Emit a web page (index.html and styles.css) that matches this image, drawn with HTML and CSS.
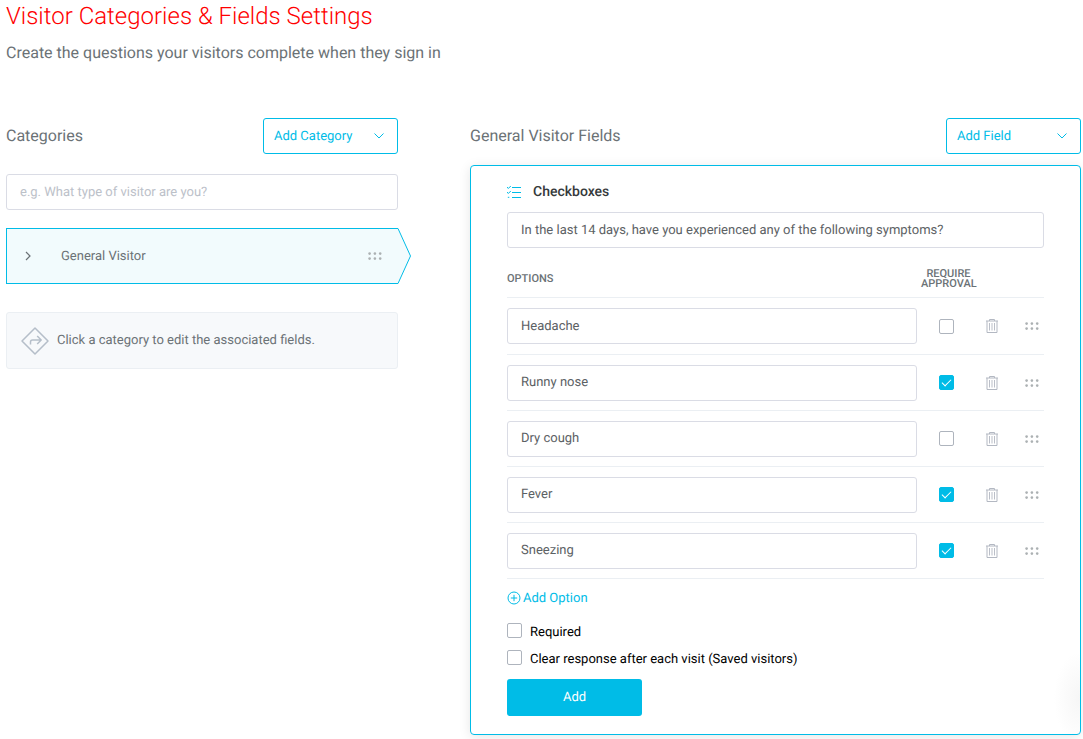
FILE: index.html
```
<!DOCTYPE html>
<html lang="en">
  <head>
    <meta charset="UTF-8" />
    <meta name="viewport" content="width=device-width, initial-scale=1.0" />
    <title>Visitor Categories &amp; Fields Settings</title>
    <link rel="stylesheet" href="styles.css">
  </head>
  <body>
    <!-- Shared icons -->
    <svg class="sprite" aria-hidden="true">
      <symbol id="icon-chevron" viewBox="0 0 10 6">
        <path d="M.5 .5 5 5 9.5 .5" fill="none" stroke="currentColor" />
      </symbol>
      <symbol id="icon-drag" viewBox="0 0 14 8">
        <g fill="currentColor">
          <circle cx="1.6" cy="1.6" r="1.3" /><circle cx="6.9" cy="1.6" r="1.3" /><circle cx="12.2" cy="1.6" r="1.3" />
          <circle cx="1.6" cy="6.6" r="1.3" /><circle cx="6.9" cy="6.6" r="1.3" /><circle cx="12.2" cy="6.6" r="1.3" />
        </g>
      </symbol>
      <symbol id="icon-trash" viewBox="0 0 12 14">
        <g fill="none" stroke="currentColor">
          <path d="M0 2h12M3.500 2V.5h5V2M1 2v11.500h10V2" />
          <path d="M3.500 4v7.500M6 4v7.500M8.500 4v7.500" stroke-width=".9" />
        </g>
      </symbol>
    </svg>

    <header>
      <h1>Visitor Categories &amp; Fields Settings</h1>
      <p class="subtitle">Create the questions your visitors complete when they sign in</p>
    </header>

    <main class="columns">
      <section class="categories">
        <div class="section-header">
          <h2>Categories</h2>
          <button class="dropdown-button" type="button">Add Category
            <svg class="chevron"><use href="#icon-chevron" /></svg>
          </button>
        </div>
        <input class="text-input category-input" type="text" aria-label="Category question" placeholder="e.g. What type of visitor are you?" />
        <div class="category">
          <svg class="category-arrow" viewBox="0 0 14 56" aria-hidden="true">
            <path d="M0 .5H1L13.500 28 1 55.500H0" fill="#f2fbfd" stroke="#00bce7" />
          </svg>
          <svg class="expand" viewBox="0 0 6 10"><path d="M1 1l4 4-4 4" fill="none" stroke="currentColor" stroke-width="1.2" /></svg>
          <span class="category-name">General Visitor</span>
          <svg class="drag"><use href="#icon-drag" /></svg>
        </div>
        <div class="tip">
          <svg class="tip-icon" viewBox="0 0 28 28" aria-hidden="true">
            <g fill="none" stroke="#b5bec9" stroke-width="1.500" stroke-linejoin="round">
              <path d="M14 1 27 14 14 27 1 14z" />
              <path d="M9.500 17.500V15q0-2 2-2h8M16.200 9l4 4-4 4" />
            </g>
          </svg>
          Click a category to edit the associated fields.
        </div>
      </section>

      <section class="fields">
        <div class="section-header">
          <h2>General Visitor Fields</h2>
          <button class="dropdown-button" type="button">Add Field
            <svg class="chevron"><use href="#icon-chevron" /></svg>
          </button>
        </div>
        <form class="card">
          <h3>
            <svg class="list-icon" viewBox="0 0 14 12" aria-hidden="true">
              <g fill="none" stroke="currentColor">
                <path d="M5 1.500h9M5 6.500h9M5 11.500h9" />
                <path d="M0 1l1.300 1.500L3.800 0M0 6l1.300 1.500L3.800 5M.8 11.300h1.500" />
              </g>
            </svg>
            Checkboxes
          </h3>
          <input class="text-input" type="text" aria-label="Question" value="In the last 14 days, have you experienced any of the following symptoms?" />

          <table class="options">
            <thead>
              <tr>
                <th class="col-name">Options</th>
                <th class="col-approval">Require Approval</th>
                <th class="col-delete"></th>
                <th class="col-drag"></th>
              </tr>
            </thead>
            <tbody>
              <tr>
                <td><input class="text-input" type="text" aria-label="Option 1" value="Headache" /></td>
                <td class="center"><input type="checkbox" aria-label="Require approval for Headache" /></td>
                <td class="center"><button class="icon-button" type="button" aria-label="Delete Headache"><svg class="trash"><use href="#icon-trash" /></svg></button></td>
                <td class="last"><svg class="drag"><use href="#icon-drag" /></svg></td>
              </tr>
              <tr>
                <td><input class="text-input" type="text" aria-label="Option 2" value="Runny nose" /></td>
                <td class="center"><input type="checkbox" aria-label="Require approval for Runny nose" checked /></td>
                <td class="center"><button class="icon-button" type="button" aria-label="Delete Runny nose"><svg class="trash"><use href="#icon-trash" /></svg></button></td>
                <td class="last"><svg class="drag"><use href="#icon-drag" /></svg></td>
              </tr>
              <tr>
                <td><input class="text-input" type="text" aria-label="Option 3" value="Dry cough" /></td>
                <td class="center"><input type="checkbox" aria-label="Require approval for Dry cough" /></td>
                <td class="center"><button class="icon-button" type="button" aria-label="Delete Dry cough"><svg class="trash"><use href="#icon-trash" /></svg></button></td>
                <td class="last"><svg class="drag"><use href="#icon-drag" /></svg></td>
              </tr>
              <tr>
                <td><input class="text-input" type="text" aria-label="Option 4" value="Fever" /></td>
                <td class="center"><input type="checkbox" aria-label="Require approval for Fever" checked /></td>
                <td class="center"><button class="icon-button" type="button" aria-label="Delete Fever"><svg class="trash"><use href="#icon-trash" /></svg></button></td>
                <td class="last"><svg class="drag"><use href="#icon-drag" /></svg></td>
              </tr>
              <tr>
                <td><input class="text-input" type="text" aria-label="Option 5" value="Sneezing" /></td>
                <td class="center"><input type="checkbox" aria-label="Require approval for Sneezing" checked /></td>
                <td class="center"><button class="icon-button" type="button" aria-label="Delete Sneezing"><svg class="trash"><use href="#icon-trash" /></svg></button></td>
                <td class="last"><svg class="drag"><use href="#icon-drag" /></svg></td>
              </tr>
            </tbody>
          </table>

          <button class="add-option" type="button">
            <svg class="plus" viewBox="0 0 14 14"><g fill="none" stroke="currentColor"><circle cx="7" cy="7" r="6" /><path d="M7 3.800v6.400M3.800 7h6.400" /></g></svg>
            Add Option
          </button>
          <div class="check-row">
            <input type="checkbox" id="required" />
            <label for="required">Required</label>
          </div>
          <div class="check-row">
            <input type="checkbox" id="clear" />
            <label for="clear">Clear response after each visit (Saved visitors)</label>
          </div>
          <button class="submit" type="button">Add</button>
        </form>
      </section>
    </main>
  </body>
</html>
```
FILE: styles.css
```
* {
  box-sizing: border-box;
}
body {
  margin: 0;
  padding: 2px 2px 4px 6px;
  font-family: Roboto, sans-serif;
  font-size: 13px;
  text-rendering: geometricPrecision;
  color: #6b7276;
  background-color: #fff;
}
button,
input {
  font: inherit;
  text-rendering: inherit;
}
svg {
  display: block;
  flex: none;
}
.sprite {
  position: absolute;
  width: 0;
  height: 0;
}
h1 {
  margin: 0;
  font-size: 24px;
  font-weight: 300;
  line-height: 28px;
  color: #ff0000;
}
.subtitle {
  margin: 13px 0 55px;
  font-size: 16px;
  line-height: 20px;
}
.columns {
  display: grid;
  grid-template-columns: 392fr 611fr;
  gap: 72px;
  align-items: start;
}
.section-header {
  display: flex;
  justify-content: space-between;
  align-items: center;
}
h2 {
  margin: 0;
  font-size: 16px;
  font-weight: 400;
  line-height: 20px;
}
.dropdown-button {
  display: flex;
  justify-content: space-between;
  align-items: center;
  width: 135px;
  height: 36px;
  padding: 0 13px 0 10px;
  border: 1px solid #00bce7;
  border-radius: 3px;
  background-color: #fff;
  color: #00bce7;
  cursor: pointer;
}
.chevron {
  width: 10px;
  height: 6px;
}
.text-input {
  display: block;
  width: 100%;
  height: 36px;
  padding: 0 13px;
  border: 1px solid #dadce5;
  border-radius: 3px;
  background-color: #fff;
  color: #5c6164;
}
.text-input::placeholder {
  color: #bcc1c9;
}
.category-input {
  margin: 20px 0 18px;
}

/* Selected category */
.category {
  position: relative;
  display: flex;
  align-items: center;
  height: 56px;
  padding: 0 16px 0 18px;
  border: 1px solid #00bce7;
  border-right: none;
  background-color: #f2fbfd;
}
.category-arrow {
  position: absolute;
  top: -1px;
  right: -13px;
  width: 14px;
  height: 56px;
}
.expand {
  width: 6px;
  height: 10px;
}
.category-name {
  flex: 1;
  margin-left: 30px;
}
.drag {
  width: 14px;
  height: 8px;
  color: #acb1b3;
}
.tip {
  display: flex;
  align-items: center;
  gap: 8px;
  height: 57px;
  margin-top: 28px;
  padding: 0 14px;
  border: 1px solid #ebeff3;
  border-radius: 3px;
  background-color: #f7f9fb;
}
.tip-icon {
  width: 28px;
  height: 28px;
}

/* Field editor */
.card {
  margin-top: 11px;
  padding: 16px 36px 18px;
  border: 1px solid #00bce7;
  border-radius: 4px;
  background: radial-gradient(ellipse 26px 46px at 100% 532px, #f6f6f6, #fff);
  box-shadow: 0 2px 12px rgba(0, 0, 0, 0.1);
}
h3 {
  display: flex;
  align-items: center;
  gap: 12px;
  margin: 0 0 10px;
  font-size: 14px;
  font-weight: 500;
  line-height: 20px;
  color: #35393b;
}
.list-icon {
  width: 14px;
  height: 12px;
  color: #00bce7;
}
.options {
  width: 100%;
  border-collapse: separate;
  border-spacing: 0;
  table-layout: fixed;
}
.options th {
  height: 50px;
  padding: 12px 0 0;
  border-bottom: 1px solid #ebeff3;
  font-size: 11px;
  font-weight: 500;
  line-height: 10px;
  text-transform: uppercase;
}
.options .col-name {
  text-align: left;
}
.options .col-approval {
  width: 59px;
  padding-left: 4px;
}
.col-delete {
  width: 31px;
}
.col-drag {
  width: 37px;
}
.options td {
  height: 56px;
  padding: 0;
  border-bottom: 1px solid #ebeff3;
  vertical-align: middle;
}
.options tr:first-child td {
  height: 57px;
}
.last .drag {
  margin-left: auto;
  margin-right: 5px;
}
.center {
  text-align: center;
}
.icon-button {
  padding: 0;
  border: none;
  background: none;
  vertical-align: middle;
  color: #b3b8c2;
  cursor: pointer;
}
.trash {
  width: 12px;
  height: 14px;
}
input[type="checkbox"] {
  appearance: none;
  display: inline-grid;
  place-items: center;
  width: 15px;
  height: 15px;
  margin: 0;
  border: 1px solid #aeb4bd;
  border-radius: 2px;
  background-color: #fff;
  vertical-align: middle;
}
input[type="checkbox"]:checked {
  border-color: #00bce7;
  background-color: #00bce7;
}
input[type="checkbox"]:checked::after {
  content: "";
  width: 8px;
  height: 4px;
  margin-bottom: 2px;
  border-left: 1px solid #fff;
  border-bottom: 1px solid #fff;
  transform: rotate(-45deg);
}
.add-option {
  display: flex;
  align-items: center;
  gap: 2px;
  height: 20px;
  margin: 9px 0 15px;
  padding: 0;
  border: none;
  background: none;
  color: #00bce7;
  cursor: pointer;
}
.plus {
  width: 14px;
  height: 14px;
}
.check-row {
  display: flex;
  align-items: flex-start;
  gap: 8px;
  height: 17px;
  margin-bottom: 10px;
  line-height: 19px;
  color: #000;
}
.submit {
  display: block;
  width: 135px;
  height: 37px;
  margin-top: 12px;
  border: none;
  border-radius: 3px;
  background-color: #00bce7;
  color: #fff;
  cursor: pointer;
}
```
